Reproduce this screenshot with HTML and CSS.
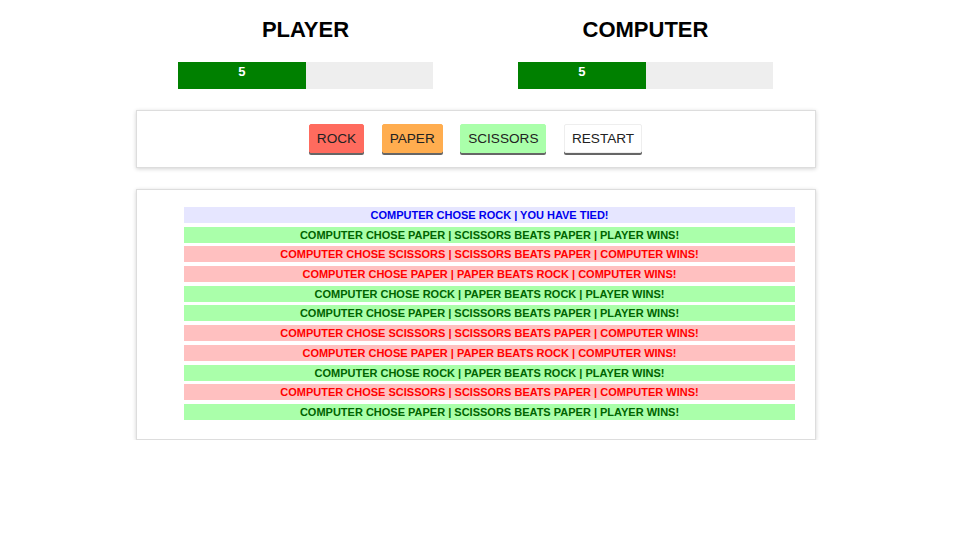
FILE: index.html
```html
<!DOCTYPE html>
<html>
<head>
<meta charset="utf-8">
<link rel="stylesheet" href="styles.css">
</head>
<body>
<div class="wrap">
  <div class="scores">
    <div class="side">
      <h2>PLAYER</h2>
      <div class="bar"><div class="fill" style="width:50%">5</div></div>
    </div>
    <div class="side">
      <h2>COMPUTER</h2>
      <div class="bar"><div class="fill" style="width:50%">5</div></div>
    </div>
  </div>
  <div class="card controls">
    <button class="btn rock">ROCK</button>
    <button class="btn paper">PAPER</button>
    <button class="btn scissors">SCISSORS</button>
    <button class="btn restart">RESTART</button>
  </div>
  <div class="card log">
    <ul class="rows">
      <li class="row tie">COMPUTER CHOSE ROCK | YOU HAVE TIED!</li>
      <li class="row win">COMPUTER CHOSE PAPER | SCISSORS BEATS PAPER | PLAYER WINS!</li>
      <li class="row lose">COMPUTER CHOSE SCISSORS | SCISSORS BEATS PAPER | COMPUTER WINS!</li>
      <li class="row lose">COMPUTER CHOSE PAPER | PAPER BEATS ROCK | COMPUTER WINS!</li>
      <li class="row win">COMPUTER CHOSE ROCK | PAPER BEATS ROCK | PLAYER WINS!</li>
      <li class="row win">COMPUTER CHOSE PAPER | SCISSORS BEATS PAPER | PLAYER WINS!</li>
      <li class="row lose">COMPUTER CHOSE SCISSORS | SCISSORS BEATS PAPER | COMPUTER WINS!</li>
      <li class="row lose">COMPUTER CHOSE PAPER | PAPER BEATS ROCK | COMPUTER WINS!</li>
      <li class="row win">COMPUTER CHOSE ROCK | PAPER BEATS ROCK | PLAYER WINS!</li>
      <li class="row lose">COMPUTER CHOSE SCISSORS | SCISSORS BEATS PAPER | COMPUTER WINS!</li>
      <li class="row win">COMPUTER CHOSE PAPER | SCISSORS BEATS PAPER | PLAYER WINS!</li>
    </ul>
  </div>
</div>
</body>
</html>
```
FILE: styles.css
```css
html, body {
  margin: 0;
  padding: 0;
  background: #fff;
  font-family: "Liberation Sans", Arial, sans-serif;
}
.wrap {
  width: 680px;
  margin-left: 135.5px;
}
.scores {
  display: flex;
}
.side {
  flex: 1;
  text-align: center;
}
.side h2 {
  margin: 17px 0 0;
  font-size: 22px;
  line-height: 26px;
  font-weight: bold;
  color: #000;
}
.bar {
  width: 75%;
  margin: 19px auto 0;
  height: 27px;
  background: #eee;
  text-align: left;
}
.fill {
  height: 100%;
  background: #008000;
  color: #fff;
  font-weight: bold;
  font-size: 13px;
  line-height: 19px;
  text-align: center;
  box-sizing: border-box;
}
.card {
  border: 1px solid #ddd;
  box-shadow: 0 1px 4px rgba(0, 0, 0, 0.18);
  background: #fff;
}
.controls {
  margin-top: 21px;
  padding: 13px 0 14px;
  display: flex;
  justify-content: center;
  gap: 17.5px;
}
.btn {
  font-family: "Liberation Sans", Arial, sans-serif;
  font-size: 13.6px;
  color: #222;
  height: 29px;
  padding: 0 7px;
  border: 1px solid #ddd;
  border-radius: 2px;
  box-shadow: 0 2px 0 #666;
  cursor: pointer;
}
.rock { background: #ff6b5e; border-color: #ff6b5e; }
.paper { background: #ffad4f; border-color: #ffad4f; }
.scissors { background: #aaffaa; border-color: #aaffaa; }
.restart { background: #fff; border-color: #eee; }
.log {
  margin-top: 21px;
  padding: 17px 0 19px;
}
.rows {
  list-style: none;
  margin: 0 0 0 47.5px;
  padding: 0;
  width: 611px;
  display: flex;
  flex-direction: column;
  gap: 3.7px;
}
.row {
  height: 16px;
  line-height: 16px;
  font-size: 11px;
  font-weight: bold;
  text-align: center;
}
.tie { background: #e6e6ff; color: #0000ee; }
.win { background: #aaffaa; color: #006400; }
.lose { background: #ffc0c0; color: #ff0000; }
```
